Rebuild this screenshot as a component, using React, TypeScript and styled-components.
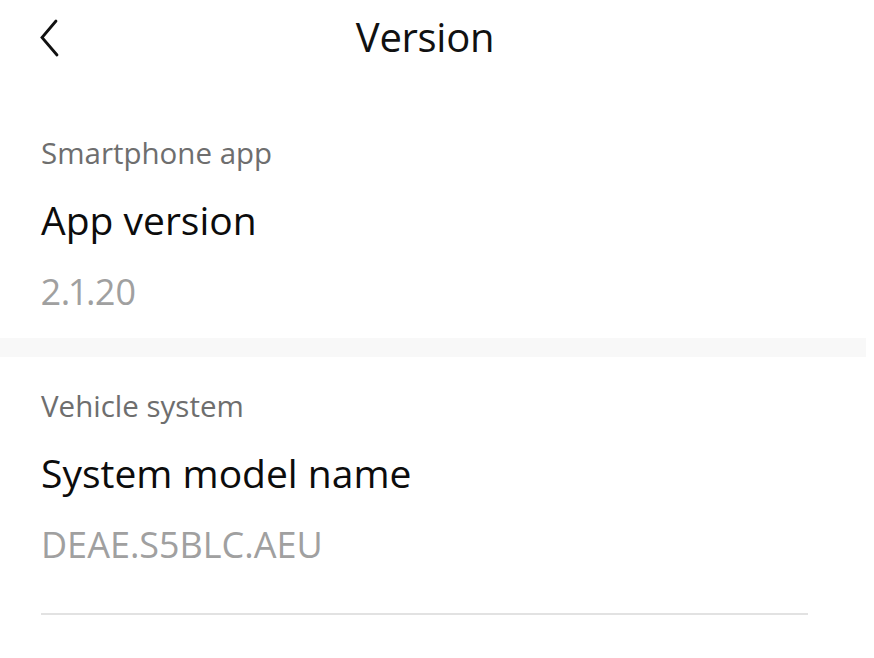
import React from "react";
import styled, { createGlobalStyle } from "styled-components";

const Global = createGlobalStyle`
  html, body { margin: 0; padding: 0; background: #ffffff; }
  body { font-family: "Open Sans", "Noto Sans", sans-serif; -webkit-font-smoothing: antialiased; }
`;

const Screen = styled.div`
  width: 874px;
  min-height: 658px;
  background: #ffffff;
  display: flex;
  flex-direction: column;
`;

const Header = styled.header`
  height: 104px;
  box-sizing: border-box;
  padding: 17px 24px 0 0;
  display: grid;
  grid-template-columns: 1fr auto 1fr;
  align-items: start;
`;

const BackButton = styled.button`
  justify-self: start;
  margin: 2px 0 0 39px;
  padding: 0;
  border: 0;
  background: none;
  width: 24px;
  height: 38px;
  display: flex;
  align-items: center;
  justify-content: center;
  cursor: pointer;
`;

const Title = styled.h1`
  margin: 0;
  font-size: 40px;
  line-height: 40px;
  font-weight: 400;
  color: #111111;
  letter-spacing: -0.3px;
`;

const Section = styled.section`
  padding: 31px 0 0 41px;
  display: flex;
  flex-direction: column;
`;

const Category = styled.div`
  font-size: 29.5px;
  line-height: 36px;
  color: #6e6e6e;
`;

const ItemName = styled.div`
  margin-top: 25px;
  font-size: 39px;
  line-height: 48px;
  color: #0c0c0c;
`;

const ItemValue = styled.div`
  margin-top: 28px;
  font-size: 36px;
  line-height: 40px;
  color: #a0a0a0;
  font-variant-numeric: proportional-nums;
`;

const Band = styled.div`
  margin-top: 26px;
  width: 866px;
  height: 19px;
  background: #f8f8f8;
`;

const Divider = styled.hr`
  margin: 48px 0 0 0;
  width: 767px;
  height: 2px;
  border: 0;
  background: #e2e2e2;
`;

const Chevron = () => (
  <svg width="24" height="38" viewBox="0 0 24 38" fill="none">
    <polyline
      points="17,2 3,18.5 18,36"
      stroke="#111"
      strokeWidth="2.8"
      strokeLinecap="round"
      strokeLinejoin="miter"
    />
  </svg>
);

export default function App() {
  return (
    <Screen>
      <Global />
      <Header>
        <BackButton aria-label="Back">
          <Chevron />
        </BackButton>
        <Title>Version</Title>
        <span />
      </Header>
      <Section>
        <Category>Smartphone app</Category>
        <ItemName>App version</ItemName>
        <ItemValue>2.1.20</ItemValue>
      </Section>
      <Band />
      <Section>
        <Category>Vehicle system</Category>
        <ItemName>System model name</ItemName>
        <ItemValue>DEAE.S5BLC.AEU</ItemValue>
        <Divider />
      </Section>
    </Screen>
  );
}
